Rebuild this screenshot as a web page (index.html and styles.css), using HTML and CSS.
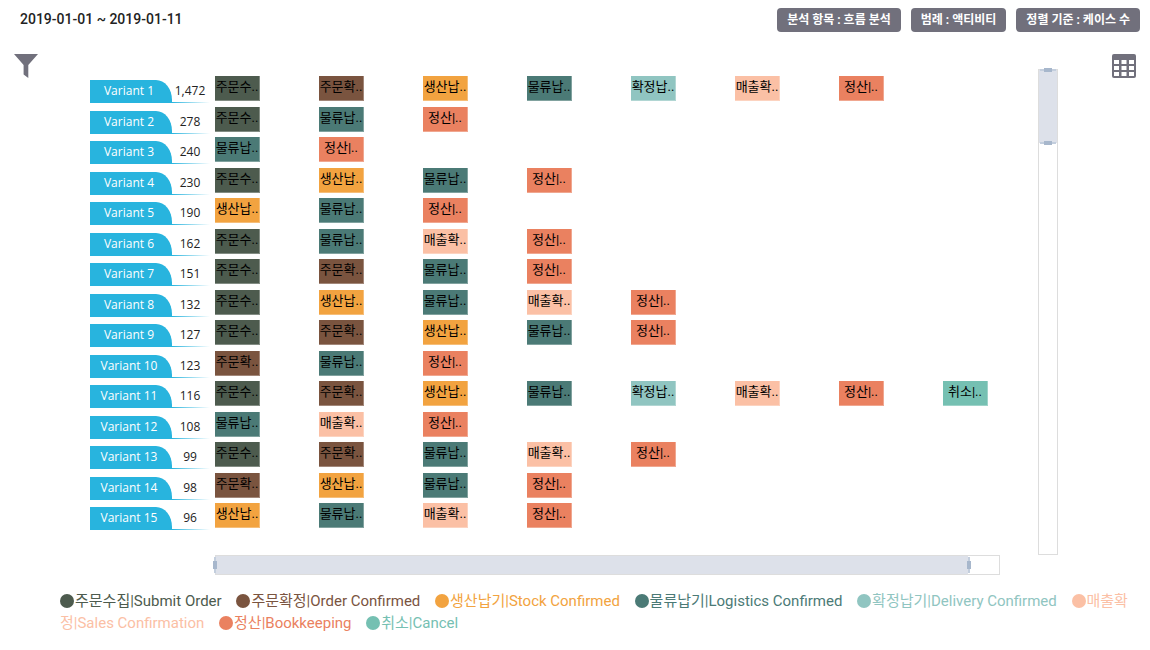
FILE: index.html
```html
<!DOCTYPE html>
<html lang="ko">
<head>
<meta charset="utf-8">
<title>흐름 분석</title>
<link rel="stylesheet" href="styles.css">
</head>
<body>
<header class="topbar">
  <div class="period">2019-01-01 ~ 2019-01-11</div>
  <div class="badges">
    <span class="badge">분석 항목 : 흐름 분석</span>
    <span class="badge">범례 : 액티비티</span>
    <span class="badge">정렬 기준 : 케이스 수</span>
  </div>
</header>
<main class="board">
  <button class="icon-button" type="button" aria-label="필터">
    <svg width="24" height="24" viewBox="0 0 24 24"><path fill="currentColor" d="M0 0H24L14.3 11V24L9.6 20.5V11Z"/></svg>
  </button>
  <section class="chart">
    <ol class="variants">
      <li class="variant"><div class="head"><span class="tab">Variant 1</span><span class="count">1,472</span></div><div class="steps"><span class="step submit">주문수..</span><span class="step order">주문확..</span><span class="step stock">생산납..</span><span class="step logistics">물류납..</span><span class="step delivery">확정납..</span><span class="step sales">매출확..</span><span class="step booking">정산|..</span></div></li>
      <li class="variant"><div class="head"><span class="tab">Variant 2</span><span class="count">278</span></div><div class="steps"><span class="step submit">주문수..</span><span class="step logistics">물류납..</span><span class="step booking">정산|..</span></div></li>
      <li class="variant"><div class="head"><span class="tab">Variant 3</span><span class="count">240</span></div><div class="steps"><span class="step logistics">물류납..</span><span class="step booking">정산|..</span></div></li>
      <li class="variant"><div class="head"><span class="tab">Variant 4</span><span class="count">230</span></div><div class="steps"><span class="step submit">주문수..</span><span class="step stock">생산납..</span><span class="step logistics">물류납..</span><span class="step booking">정산|..</span></div></li>
      <li class="variant"><div class="head"><span class="tab">Variant 5</span><span class="count">190</span></div><div class="steps"><span class="step stock">생산납..</span><span class="step logistics">물류납..</span><span class="step booking">정산|..</span></div></li>
      <li class="variant"><div class="head"><span class="tab">Variant 6</span><span class="count">162</span></div><div class="steps"><span class="step submit">주문수..</span><span class="step logistics">물류납..</span><span class="step sales">매출확..</span><span class="step booking">정산|..</span></div></li>
      <li class="variant"><div class="head"><span class="tab">Variant 7</span><span class="count">151</span></div><div class="steps"><span class="step submit">주문수..</span><span class="step order">주문확..</span><span class="step logistics">물류납..</span><span class="step booking">정산|..</span></div></li>
      <li class="variant"><div class="head"><span class="tab">Variant 8</span><span class="count">132</span></div><div class="steps"><span class="step submit">주문수..</span><span class="step stock">생산납..</span><span class="step logistics">물류납..</span><span class="step sales">매출확..</span><span class="step booking">정산|..</span></div></li>
      <li class="variant"><div class="head"><span class="tab">Variant 9</span><span class="count">127</span></div><div class="steps"><span class="step submit">주문수..</span><span class="step order">주문확..</span><span class="step stock">생산납..</span><span class="step logistics">물류납..</span><span class="step booking">정산|..</span></div></li>
      <li class="variant"><div class="head"><span class="tab">Variant 10</span><span class="count">123</span></div><div class="steps"><span class="step order">주문확..</span><span class="step logistics">물류납..</span><span class="step booking">정산|..</span></div></li>
      <li class="variant"><div class="head"><span class="tab">Variant 11</span><span class="count">116</span></div><div class="steps"><span class="step submit">주문수..</span><span class="step order">주문확..</span><span class="step stock">생산납..</span><span class="step logistics">물류납..</span><span class="step delivery">확정납..</span><span class="step sales">매출확..</span><span class="step booking">정산|..</span><span class="step cancel">취소|..</span></div></li>
      <li class="variant"><div class="head"><span class="tab">Variant 12</span><span class="count">108</span></div><div class="steps"><span class="step logistics">물류납..</span><span class="step sales">매출확..</span><span class="step booking">정산|..</span></div></li>
      <li class="variant"><div class="head"><span class="tab">Variant 13</span><span class="count">99</span></div><div class="steps"><span class="step submit">주문수..</span><span class="step order">주문확..</span><span class="step logistics">물류납..</span><span class="step sales">매출확..</span><span class="step booking">정산|..</span></div></li>
      <li class="variant"><div class="head"><span class="tab">Variant 14</span><span class="count">98</span></div><div class="steps"><span class="step order">주문확..</span><span class="step stock">생산납..</span><span class="step logistics">물류납..</span><span class="step booking">정산|..</span></div></li>
      <li class="variant"><div class="head"><span class="tab">Variant 15</span><span class="count">96</span></div><div class="steps"><span class="step stock">생산납..</span><span class="step logistics">물류납..</span><span class="step sales">매출확..</span><span class="step booking">정산|..</span></div></li>
    </ol>
    <div class="zoom zoom-x"><div class="range"><i class="handle start"></i><i class="handle end"></i></div></div>
  </section>
  <div class="zoom zoom-y"><div class="range"><i class="handle start"></i><i class="handle end"></i></div></div>
  <button class="icon-button" type="button" aria-label="표 보기">
    <svg width="24" height="24" viewBox="0 0 24 24"><rect width="24" height="24" rx="2" fill="currentColor"/><path fill="#fff" d="M2 6h5v4H2zM9.5 6h5v4h-5zM17 6h5v4h-5zM2 12h5v4H2zM9.5 12h5v4h-5zM17 12h5v4h-5zM2 18h5v4H2zM9.5 18h5v4h-5zM17 18h5v4h-5z"/></svg>
  </button>
</main>
<footer class="legend">
  <span class="entry submit">주문수집|Submit Order</span>
  <span class="entry order">주문확정|Order Confirmed</span>
  <span class="entry stock">생산납기|Stock Confirmed</span>
  <span class="entry logistics">물류납기|Logistics Confirmed</span>
  <span class="entry delivery">확정납기|Delivery Confirmed</span>
  <span class="entry sales">매출확정|Sales Confirmation</span>
  <span class="entry booking">정산|Bookkeeping</span>
  <span class="entry cancel">취소|Cancel</span>
</footer>
</body>
</html>
```
FILE: styles.css
```css
* { box-sizing: border-box; }

body {
  margin: 0;
  background: #fff;
  color: #222;
  font-family: Roboto, "Noto Sans CJK KR", sans-serif;
}

.submit { --c: #4d5b4e; }
.order { --c: #7a543f; }
.stock { --c: #f2a340; }
.logistics { --c: #4b7a76; }
.delivery { --c: #90c5c1; }
.sales { --c: #fbc0a5; }
.booking { --c: #ea8160; }
.cancel { --c: #75c0b2; }

.topbar {
  display: flex;
  justify-content: space-between;
  padding: 8px 10px 0 20px;
}

.period {
  font-size: 14px;
  font-weight: 500;
  line-height: 22px;
}

.badges {
  display: flex;
  gap: 10px;
}

.badge {
  padding: 0 10px;
  border-radius: 4px;
  background: #71707c;
  color: #fff;
  font-size: 12px;
  font-weight: 700;
  line-height: 24px;
}

.board {
  display: flex;
  align-items: stretch;
  padding: 22px 14px 0;
}

.icon-button {
  align-self: flex-start;
  width: 24px;
  height: 24px;
  padding: 0;
  border: 0;
  background: none;
  color: #71707c;
  cursor: pointer;
}

.icon-button svg { display: block; }

.chart {
  flex: 1;
  margin-left: 52px;
  padding-top: 22px;
}

.variants {
  display: grid;
  grid-template-rows: repeat(15, 1fr);
  height: 458px;
  margin: 0 0 21px;
  padding: 0;
  list-style: none;
}

.variant {
  display: flex;
  align-items: flex-start;
  gap: 5px;
}

.head {
  display: flex;
  width: 120px;
  margin-top: 4px;
  padding-bottom: 1px;
  background: linear-gradient(to right, #28b4de 82px, #fff) bottom / 100% 1px no-repeat;
  font-family: "Open Sans", "Noto Sans", sans-serif;
  font-size: 12px;
  line-height: 22px;
}

.tab {
  width: 82px;
  padding-right: 4px;
  border-top-right-radius: 16px 20px;
  background: #28b4de;
  color: #fff;
  font-weight: 500;
  text-align: center;
}

.count {
  width: 36px;
  text-align: center;
}

.steps {
  flex: 1;
  display: grid;
  grid-template-columns: repeat(8, 45px);
  justify-content: space-between;
  padding-right: 12px;
}

.step {
  height: 25px;
  border: solid rgba(255, 255, 255, 0.3);
  border-width: 0 1px 1px 0;
  background: var(--c);
  color: #000;
  font-family: Roboto, "Noto Sans CJK KR", sans-serif;
  font-size: 13px;
  line-height: 22px;
  text-align: center;
  white-space: nowrap;
}

.zoom {
  border: 1px solid #ddd;
}

.zoom-x {
  height: 20px;
  margin-left: 125px;
}

.zoom-y {
  width: 20px;
  margin: 15px 54px 20px 38px;
}

.range {
  position: relative;
  background: #dde1ea;
}

.zoom-x .range {
  width: 96%;
  height: 100%;
}

.zoom-y .range {
  height: 15%;
}

.handle {
  position: absolute;
  background:
    linear-gradient(#a7b7cc, #a7b7cc) center / 4px 8px no-repeat,
    linear-gradient(#c3cedd, #c3cedd) center / 2px 100% no-repeat;
}

.zoom-x .handle {
  top: 1px;
  bottom: 1px;
  width: 4px;
}

.zoom-x .start { left: -3px; }
.zoom-x .end { right: -3px; }

.zoom-y .handle {
  left: 1px;
  right: 1px;
  height: 4px;
  background:
    linear-gradient(#a7b7cc, #a7b7cc) center / 8px 4px no-repeat,
    linear-gradient(#c3cedd, #c3cedd) center / 100% 2px no-repeat;
}

.zoom-y .start { top: -2px; }
.zoom-y .end { bottom: -2px; }

.legend {
  padding: 15px 10px 0 60px;
  font-size: 15px;
  line-height: 22px;
}

.entry {
  margin-right: 11px;
  color: var(--c);
}

.entry::before {
  content: "";
  display: inline-block;
  width: 14px;
  height: 14px;
  margin-right: 1px;
  border-radius: 50%;
  background: var(--c);
  vertical-align: -2px;
}
```
